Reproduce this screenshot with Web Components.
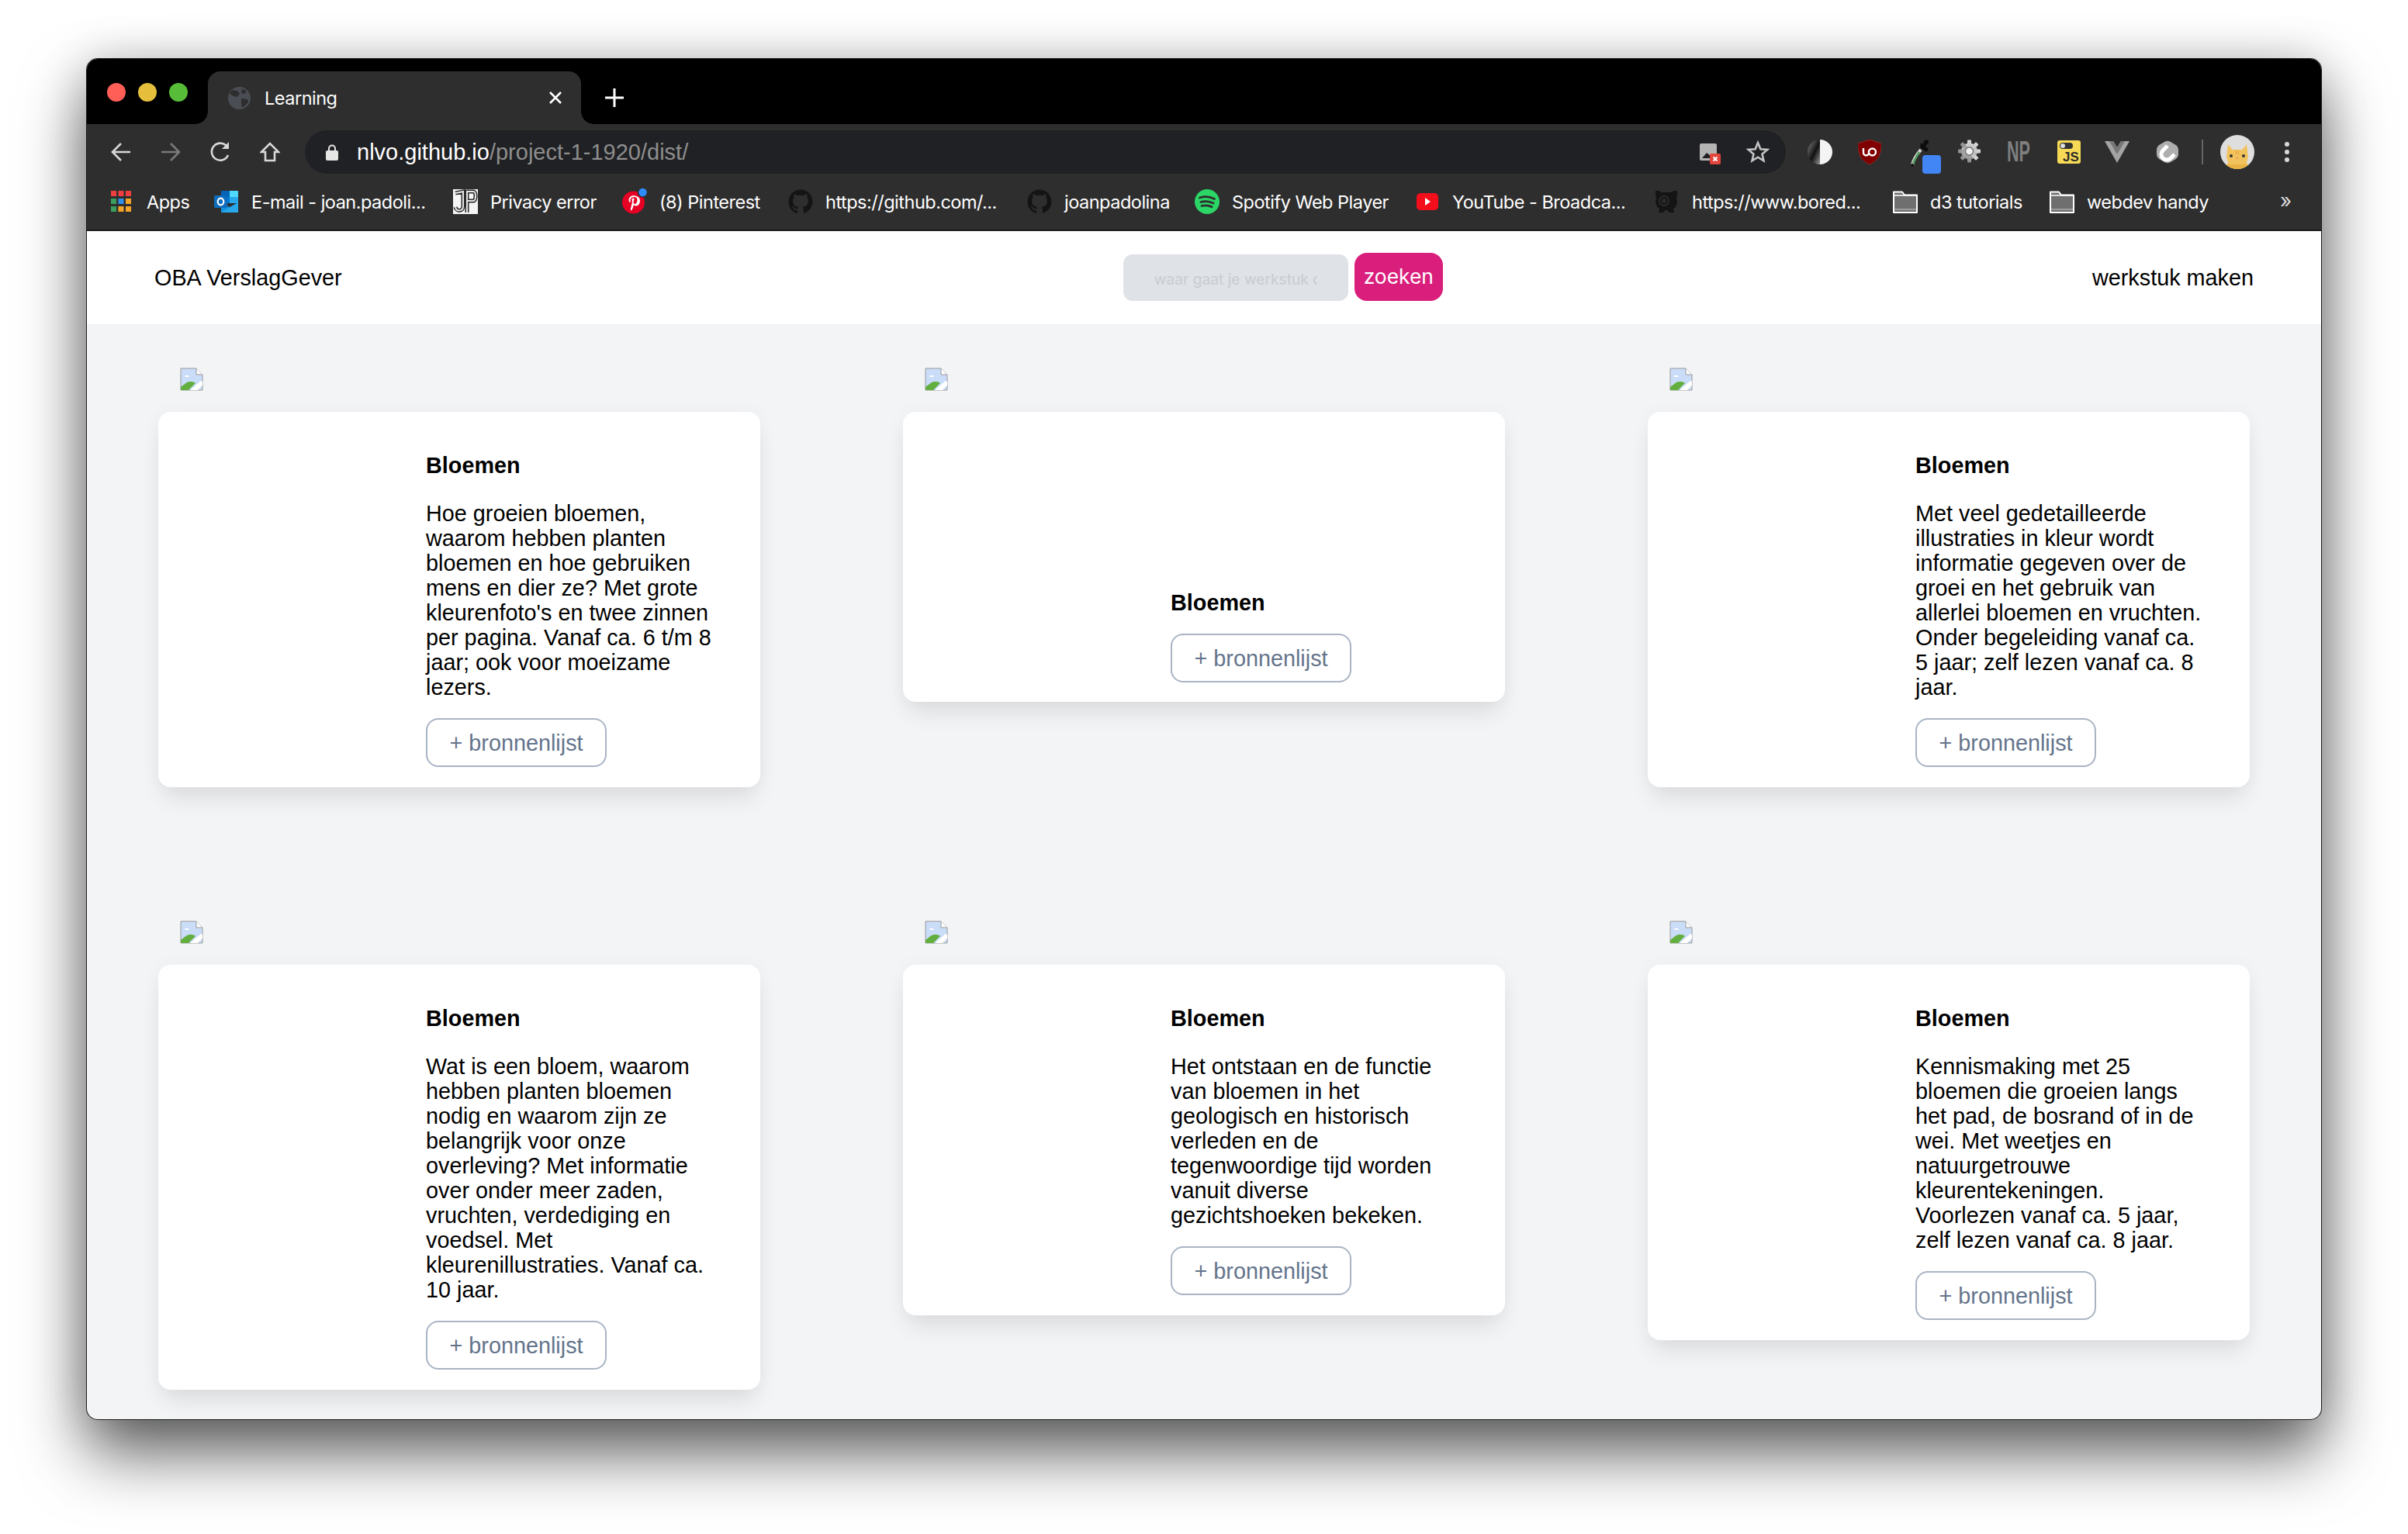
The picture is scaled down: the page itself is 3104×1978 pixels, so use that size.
<!DOCTYPE html>
<html lang="nl">
<head>
<meta charset="utf-8">
<title>Learning</title>
<style>
  html, body { margin: 0; height: 100%; background: #fff; }
  body { font-family: "Liberation Sans", Arial, sans-serif; overflow: hidden; }
</style>
</head>
<body>
<browser-window>
  <tab-strip slot="tabs" title="Learning"></tab-strip>
  <browser-toolbar slot="toolbar"></browser-toolbar>
  <bookmark-bar slot="bookmarks">
    <bookmark-item icon="apps" narrow>Apps</bookmark-item>
    <bookmark-item icon="outlook">E-mail - joan.padoli...</bookmark-item>
    <bookmark-item icon="jp">Privacy error</bookmark-item>
    <bookmark-item icon="pinterest">(8) Pinterest</bookmark-item>
    <bookmark-item icon="github">https://github.com/...</bookmark-item>
    <bookmark-item icon="github">joanpadolina</bookmark-item>
    <bookmark-item icon="spotify">Spotify Web Player</bookmark-item>
    <bookmark-item icon="youtube" narrow>YouTube - Broadca...</bookmark-item>
    <bookmark-item icon="panda">https://www.bored...</bookmark-item>
    <bookmark-item icon="folder">d3 tutorials</bookmark-item>
    <bookmark-item icon="folder">webdev handy</bookmark-item>
  </bookmark-bar>
  <site-nav slot="page"></site-nav>
  <card-grid slot="page">
    <result-card>Hoe groeien bloemen, waarom hebben planten bloemen en hoe gebruiken mens en dier ze? Met grote kleurenfoto's en twee zinnen per pagina. Vanaf ca. 6 t/m 8 jaar; ook voor moeizame lezers.</result-card>
    <result-card></result-card>
    <result-card>Met veel gedetailleerde illustraties in kleur wordt informatie gegeven over de groei en het gebruik van allerlei bloemen en vruchten. Onder begeleiding vanaf ca. 5 jaar; zelf lezen vanaf ca. 8 jaar.</result-card>
    <result-card>Wat is een bloem, waarom hebben planten bloemen nodig en waarom zijn ze belangrijk voor onze overleving? Met informatie over onder meer zaden, vruchten, verdediging en voedsel. Met kleurenillustraties. Vanaf ca. 10 jaar.</result-card>
    <result-card>Het ontstaan en de functie van bloemen in het geologisch en historisch verleden en de tegenwoordige tijd worden vanuit diverse gezichtshoeken bekeken.</result-card>
    <result-card>Kennismaking met 25 bloemen die groeien langs het pad, de bosrand of in de wei. Met weetjes en natuurgetrouwe kleurentekeningen. Voorlezen vanaf ca. 5 jaar, zelf lezen vanaf ca. 8 jaar.</result-card>
  </card-grid>
</browser-window>

<script>
const ICONS = {
  apps: `<svg width="26" height="32" viewBox="0 0 26 32">
    <rect y="2" width="7" height="7" fill="#ef3e3e"/><rect x="9.500" y="2" width="7" height="7" fill="#ef3e3e"/><rect x="19" y="2" width="7" height="7" fill="#ef3e3e"/>
    <rect y="12" width="7" height="7" fill="#3a9e5c"/><rect x="9.500" y="12" width="7" height="7" fill="#2f8ee8"/><rect x="19" y="12" width="7" height="7" fill="#f4a528"/>
    <rect y="22" width="7" height="7" fill="#3a9e5c"/><rect x="9.500" y="22" width="7" height="7" fill="#f4a528"/><rect x="19" y="22" width="7" height="7" fill="#f4a528"/></svg>`,
  outlook: `<svg width="32" height="32" viewBox="0 0 32 32">
    <rect x="9" y="2" width="22" height="16" fill="#28a8ea"/><rect x="9" y="2" width="11" height="8" fill="#0364b8"/><rect x="20" y="2" width="11" height="8" fill="#50d9ff"/><rect x="9" y="10" width="11" height="8" fill="#0078d4"/>
    <path d="M9 17l11 6 11-6v13H9z" fill="#1490df"/><path d="M9 30l22-13v13z" fill="#28a8ea"/>
    <rect y="8" width="17" height="16" rx="1.500" fill="#0f6cbd"/><ellipse cx="8.500" cy="16" rx="3.800" ry="4.300" fill="none" stroke="#fff" stroke-width="2.200"/></svg>`,
  jp: `<svg width="32" height="32" viewBox="0 0 32 32"><rect width="32" height="32" fill="#f6f6f6"/>
    <path d="M3 5l10-2v19c0 7-9 7-10 1M18 30V3h8c4 0 4 12 0 12h-8" fill="none" stroke="#2a2a2a" stroke-width="5"/>
    <path d="M3 5l10-2v19c0 7-9 7-10 1M18 30V3h8c4 0 4 12 0 12h-8" fill="none" stroke="#e6e6e6" stroke-width="2"/></svg>`,
  pinterest: `<svg width="34" height="34" viewBox="0 0 34 34" style="overflow:visible"><circle cx="14.500" cy="18" r="14.500" fill="#e60023"/>
    <path d="M15.500 9c-5 0-7 3-7 6 0 2 1 3 2 3 1-1 0-1 0-3 0-2 2-4 5-4s4 2 4 4c0 3-2 5-3 5s-2-1-2-2l1-4c0-2-3-2-3 1l.5 2-2 9c0 1 0 2 .5 3 1-1 2-3 2.500-5l1-3c.5 1 2 1.500 3 1.500 3 0 5-3 5-7 0-3-3-6-7-6z" fill="#fff"/>
    <circle cx="26.500" cy="5" r="6" fill="#2f8cff" stroke="#2e2e2e" stroke-width="1.500"/></svg>`,
  github: `<svg width="32" height="32" viewBox="0 0 32 32"><path d="M16 .5C7.200.5.500 7.600.500 16.200c0 6.900 4.300 12.700 10.400 14.800.8.100 1.100-.3 1.100-.8v-2.900c-4.300 1-5.200-2-5.200-2-.7-1.800-1.700-2.300-1.700-2.300-1.400-1 .1-1 .1-1 1.500.1 2.400 1.600 2.400 1.600 1.400 2.400 3.600 1.700 4.500 1.300.1-1 .5-1.700 1-2.100-3.500-.4-7.100-1.800-7.100-7.800 0-1.700.6-3.100 1.600-4.200-.2-.4-.7-2 .1-4.200 0 0 1.300-.4 4.300 1.600a15 15 0 0 1 7.800 0c3-2 4.300-1.600 4.300-1.600.9 2.200.3 3.800.1 4.200 1 1.100 1.600 2.500 1.600 4.200 0 6-3.700 7.400-7.100 7.800.6.500 1.100 1.400 1.100 2.900v4.300c0 .4.300.9 1.100.8 6.100-2.100 10.500-7.900 10.500-14.800C31.500 7.600 24.800.5 16 .5z" fill="#141414"/></svg>`,
  spotify: `<svg width="32" height="32" viewBox="0 0 32 32"><circle cx="16" cy="16" r="16" fill="#2bd566"/>
    <path d="M6.500 11c6-2 13-1.500 19 1.500M8 16.500c5-1.500 11-1 16 1.500M9 21.500c4.500-1 9-.7 13 1.300" fill="none" stroke="#2e2e2e" stroke-width="2.800" stroke-linecap="round"/></svg>`,
  youtube: `<svg width="28" height="32" viewBox="0 0 28 32"><rect y="5" width="28" height="22" rx="5" fill="#f40d1b"/><path d="M11 11l7 5-7 5z" fill="#fff"/></svg>`,
  panda: `<svg width="30" height="32" viewBox="0 0 30 32"><path d="M1 2h5l2 2h14l2-2h5v7l-1 2c2 7 0 12-4 14l1 5h-7l-1-3h-4l-1 3H5l1-5c-4-2-6-7-4-14l-1-2z" fill="#141414"/><circle cx="12" cy="15" r="7" fill="#2b2b2b"/><circle cx="12" cy="15" r="4" fill="none" stroke="#141414" stroke-width="2"/><circle cx="23" cy="15" r="1.500" fill="#141414"/></svg>`,
  folder: `<svg width="32" height="32" viewBox="0 0 32 32"><path d="M1 3.500h11l3 4h16v22.500H1z" fill="#6f6f6f" stroke="#fff" stroke-width="2" stroke-linejoin="round"/><path d="M1 8h30" stroke="#fff" stroke-width="1.500"/><path d="M2 26h28" stroke="#aaa" stroke-width="1.500"/></svg>`
};

// shared helper: each class just writes its own style + markup
function shadow(el, html) {
  el.attachShadow({ mode: "open" }).innerHTML = html;
}

class BrowserWindow extends HTMLElement {
  constructor() {
    super();
    shadow(this, `
      <style>
        :host { display: block; box-sizing: border-box; padding: 76px 112px 148px; height: 100vh; }
        .win {
          height: 100%; display: flex; flex-direction: column; overflow: hidden;
          border-radius: 14px; background: #f3f4f6;
          box-shadow: 0 0 0 1px #1a1a1a, 0 44px 84px rgba(0,0,0,.62), 0 0 60px rgba(0,0,0,.18);
        }
        .page { flex: 1; min-height: 0; overflow: hidden; }
      </style>
      <div class="win">
        <slot name="tabs"></slot>
        <slot name="toolbar"></slot>
        <slot name="bookmarks"></slot>
        <div class="page"><slot name="page"></slot></div>
      </div>`);
  }
}

class TabStrip extends HTMLElement {
  constructor() {
    super();
    shadow(this, `
      <style>
        :host { display: flex; height: 84px; background: #000; color: #fff; font: 23.500px Inter, sans-serif; }
        .lights { display: flex; gap: 16px; padding: 31px 0 0 26px; width: 156px; box-sizing: border-box; flex: none; }
        .lights i { width: 24px; height: 24px; border-radius: 50%; }
        .tab {
          width: 481px; margin-top: 16px; background: #2e2e2e; border-radius: 16px 16px 0 0;
          display: flex; align-items: center; padding: 0 24px 0 26px; box-sizing: border-box; position: relative; flex: none;
        }
        .tab::before, .tab::after { content: ""; position: absolute; bottom: 0; width: 16px; height: 16px; }
        .tab::before { left: -16px; background: radial-gradient(circle at 0 0, #000 15.500px, #2e2e2e 16px); }
        .tab::after { right: -16px; background: radial-gradient(circle at 100% 0, #000 15.500px, #2e2e2e 16px); }
        .name { margin-left: 18px; flex: 1; letter-spacing: -.5px; }
        .plus { margin: 38px 0 0 31px; align-self: flex-start; flex: none; }
      </style>
      <div class="lights"><i style="background:#ff5f57"></i><i style="background:#e5bf3c"></i><i style="background:#57bd38"></i></div>
      <div class="tab">
        <svg width="29" height="29" viewBox="0 0 29 29"><circle cx="14.500" cy="14.500" r="14.500" fill="#4a4e54"/><path d="M5 4l7 1 3 4-3 4-5-1-5-3zM18 2l6 4-3 3-4-1zM17 15l8 1 1 4-6 6-3-1z" fill="#2e2e2e"/></svg>
        <span class="name">${this.getAttribute("title") || ""}</span>
        <svg width="18" height="18" viewBox="0 0 18 18"><path d="M2 2l14 14M16 2L2 16" stroke="#fff" stroke-width="2.600"/></svg>
      </div>
      <svg class="plus" width="24" height="24" viewBox="0 0 24 24"><path d="M12 0v24M0 12h24" stroke="#fff" stroke-width="3"/></svg>`);
  }
}

class BrowserToolbar extends HTMLElement {
  constructor() {
    super();
    const stroke = 'fill="none" stroke="#d8d8d8" stroke-width="2.600"';
    shadow(this, `
      <style>
        :host { display: flex; align-items: center; height: 72px; padding: 8px 0 8px 31px; box-sizing: border-box; background: #2e2e2e; }
        svg { display: block; flex: none; }
        .nav { display: flex; gap: 38px; width: 250px; flex: none; align-items: center; }
        .omni {
          width: 1909px; height: 56px; background: #202124; border-radius: 28px; display: flex; align-items: center;
          font: 29px "Liberation Sans", Arial, sans-serif; color: #fff; box-sizing: border-box; padding-left: 27px; flex: none;
        }
        .url { margin-left: 24px; flex: 1; white-space: nowrap; }
        .url span { color: #8e8e8e; }
        .ext { display: flex; align-items: center; margin-left: 28px; height: 56px; }
        .sep { width: 2px; height: 32px; background: #666; }
      </style>
      <div class="nav">
        <svg width="26" height="26" viewBox="0 0 26 26"><path d="M25 13H3M13 2L2 13l11 11" ${stroke}/></svg>
        <svg width="26" height="26" viewBox="0 0 26 26"><path d="M1 13h22M13 2l11 11-11 11" fill="none" stroke="#7a7a7a" stroke-width="2.600"/></svg>
        <svg style="margin-right:-2px" width="28" height="26" viewBox="0 0 28 26"><path d="M23 17a11 11 0 1 1-1-10.500" ${stroke}/><path d="M24 0v9h-9z" fill="#d8d8d8"/></svg>
        <svg width="26" height="26" viewBox="0 0 26 26"><path d="M2 13L13 2l11 11h-5v11H7V13z" ${stroke}/></svg>
      </div>
      <div class="omni">
        <svg width="16" height="21" viewBox="0 0 16 21"><path d="M4 9V5.500a4 4 0 0 1 8 0V9" fill="none" stroke="#e6e6e6" stroke-width="2"/><rect y="8" width="16" height="13" rx="2" fill="#e6e6e6"/></svg>
        <div class="url">nlvo.github.io<span>/project-1-1920/dist/</span></div>
        <svg style="margin-top:5px" width="27" height="27" viewBox="0 0 27 27"><rect width="22" height="22" rx="2" fill="#b4b4b4"/><path d="M3 19l6-7 5 4 3-2 4 5z" fill="#202124"/><rect x="13" y="13" width="14" height="14" rx="2" fill="#e0443a"/><path d="M17.500 17.500l5 5M22.500 17.500l-5 5" stroke="#fff" stroke-width="2"/></svg>
        <svg style="margin:0 21px 0 33px" width="30" height="30" viewBox="0 0 30 30"><path d="M15 3l3.400 8.200 8.800.7-6.700 5.800 2 8.600L15 21.700l-7.500 4.600 2-8.600L2.800 11.900l8.800-.7z" fill="none" stroke="#c4c4c4" stroke-width="2.600"/></svg>
      </div>
      <div class="ext">
        <svg width="32" height="32" viewBox="0 0 32 32"><defs><linearGradient id="c" x1="0" x2="1" y1="0" y2="1"><stop offset="0" stop-color="#888"/><stop offset=".55" stop-color="#111"/><stop offset="1" stop-color="#999"/></linearGradient></defs><path d="M16 0a16 16 0 0 0 0 32z" fill="url(#c)"/><path d="M16 0a16 16 0 0 1 0 32z" fill="#f4f4f4"/></svg>
        <svg style="margin-left:33px" width="30" height="32" viewBox="0 0 30 32"><path d="M15 0l15 5c0 12-2 21-15 27C2 26 0 17 0 5z" fill="#800000" stroke="#9a3030" stroke-width=".8"/><path d="M7 11v6a3.500 3.500 0 0 0 7 0v-3.500M14 16a4.500 4.500 0 1 0 9 0 4.500 4.500 0 1 0-9 0" fill="none" stroke="#fff" stroke-width="2.400"/></svg>
        <svg style="margin:12px 0 0 38px" width="39" height="44" viewBox="0 0 39 44"><path d="M2 33c1-6 6-14 11-20" fill="none" stroke="#d8d8d8" stroke-width="4"/><path d="M3 31c2-5 5-10 8-15" stroke="#4d9a55" stroke-width="2.500"/><path d="M12 10l8 6 3-4-4-3 4-5c1-3-3-5-5-3l-3 5-2-2z" fill="#0d0d0d"/><circle cx="2" cy="33" r="2" fill="#111"/><rect x="15" y="20" width="24" height="24" rx="4" fill="#4285f4"/></svg>
        <svg style="margin-left:22px" width="29" height="32" viewBox="0 0 29 32"><defs><linearGradient id="g" x1="0" x2="0" y1="0" y2="1"><stop offset="0" stop-color="#dcdcdc"/><stop offset="1" stop-color="#8e8e8e"/></linearGradient></defs><g transform="translate(14.500 15)"><g fill="url(#g)"><circle r="10.500"/><rect x="-2.500" y="-14.500" width="5" height="29" rx="1"/><rect x="-2.500" y="-14.500" width="5" height="29" rx="1" transform="rotate(45)"/><rect x="-2.500" y="-14.500" width="5" height="29" rx="1" transform="rotate(90)"/><rect x="-2.500" y="-14.500" width="5" height="29" rx="1" transform="rotate(135)"/></g><circle r="5" fill="#f2f2f2" stroke="#777" stroke-width="1.500"/></g></svg>
        <span style="margin-left:34px;width:29px;color:#7f7f7f;font:700 36px 'Liberation Sans',sans-serif;transform:scaleX(.6);transform-origin:left;line-height:1;flex:none">NP</span>
        <svg style="margin-left:36px" width="30" height="30" viewBox="0 0 30 30"><rect width="30" height="30" rx="3" fill="#f6d955"/><rect x="3" y="3" width="17" height="8" rx="4" fill="#333"/><circle cx="7" cy="7" r="3" fill="#ddd"/><text x="7" y="27" font-family="Liberation Sans, sans-serif" font-weight="700" font-size="17" fill="#2b2b2b">JS</text></svg>
        <svg style="margin-left:31px" width="32" height="28" viewBox="0 0 32 28"><path d="M0 0h11l5 8 5-8h11L16 28z" fill="#a4a4a4"/><path d="M6 0h5l5 8 5-8h5L16 17z" fill="#777"/></svg>
        <svg style="margin-left:33px" width="32" height="32" viewBox="0 0 32 32"><path d="M12 3a8 8 0 0 1 8 0l6 3.500a8 8 0 0 1 4 7v5a8 8 0 0 1-4 7L20 29a8 8 0 0 1-8 0l-6-3.500a8 8 0 0 1-4-7v-5a8 8 0 0 1 4-7z" fill="#aeaeae"/><path d="M16 8l-6 6a7 7 0 0 0 10 10l5-5" fill="none" stroke="#fff" stroke-width="5"/></svg>
        <span class="sep" style="margin-left:28px;flex:none"></span>
        <svg style="margin-left:22px" width="44" height="44" viewBox="0 0 44 44"><clipPath id="av"><circle cx="22" cy="22" r="22"/></clipPath><circle cx="22" cy="22" r="22" fill="#dedede"/><g clip-path="url(#av)"><path d="M10 12l6 7h12l6-7 2 16-2 8 4 8H6l4-8-2-8z" fill="#f2c35c"/><path d="M20 20h1v5h-1zM23 20h1v5h-1z" fill="#e09a45"/><path d="M8 38h28v6H8z" fill="#e9b244"/><circle cx="14" cy="27" r="2" fill="#333"/><circle cx="30" cy="27" r="2" fill="#333"/><path d="M20 29h4l-2 2z" fill="#e8846a"/></g></svg>
        <svg style="margin-left:37px" width="10" height="32" viewBox="0 0 10 32"><circle cx="5" cy="6" r="3" fill="#d8d8d8"/><circle cx="5" cy="16" r="3" fill="#d8d8d8"/><circle cx="5" cy="26" r="3" fill="#d8d8d8"/></svg>
      </div>`);
  }
}

class BookmarkBar extends HTMLElement {
  constructor() {
    super();
    shadow(this, `
      <style>
        :host {
          display: grid; align-items: center;
          grid-template-columns: 133px 308px 218px 214px 308px 216px 286px 307px 307px 202px 297px auto;
          height: 66px; padding: 0 0 8px 31px; box-sizing: border-box;
          background: #2e2e2e; border-bottom: 2px solid #1d1d1d; color: #fff;
        }
        .more { font: 26px Inter, sans-serif; color: #ddd; margin-top: -4px; }
      </style>
      <slot></slot><span class="more">»</span>`);
  }
}

class BookmarkItem extends HTMLElement {
  constructor() {
    super();
    shadow(this, `
      <style>
        :host { display: flex; align-items: center; gap: 16px; font: 23.500px Inter, sans-serif; letter-spacing: -.5px; white-space: nowrap; }
        svg { display: block; flex: none; }
        .i { display: flex; flex: none; width: 32px; }
        :host([narrow]) .i { width: 30px; }
      </style>
      <span class="i">${ICONS[this.getAttribute("icon")]}</span><slot></slot>`);
  }
}

class SiteNav extends HTMLElement {
  constructor() {
    super();
    shadow(this, `
      <style>
        :host {
          display: flex; align-items: center; justify-content: space-between; height: 120px; padding: 0 87px;
          box-sizing: border-box; background: #fff; color: #000; font: 28.800px "Liberation Sans", Arial, sans-serif;
        }
        .search { display: flex; align-items: flex-end; gap: 8px; font-family: Inter, sans-serif; height: 62px; margin-left: 170px; margin-top: -2px; }
        .box {
          width: 290px; height: 60px; background: #dfe2e7; border-radius: 12px; box-sizing: border-box;
          padding: 0 40px; color: #c9ccd1; font-size: 19.200px; display: flex; align-items: center; overflow: hidden; white-space: nowrap;
        }
        .box span { display: block; width: 210px; overflow: hidden; margin-top: 4px; }
        .go { width: 114px; height: 62px; background: #d91e7c; color: #fff; border-radius: 16px; display: flex; align-items: center; justify-content: center; font-size: 26.400px; padding-bottom: 2px; box-sizing: border-box; }
      </style>
      <span>OBA VerslagGever</span>
      <div class="search"><div class="box"><span>waar gaat je werkstuk over</span></div><div class="go">zoeken</div></div>
      <span>werkstuk maken</span>`);
  }
}

class CardGrid extends HTMLElement {
  constructor() {
    super();
    shadow(this, `
      <style>
        :host { display: grid; grid-template-columns: repeat(3, 776px); column-gap: 184px; row-gap: 172px; align-items: start; padding: 56px 0 0 92px; }
      </style>
      <slot></slot>`);
  }
}

class ResultCard extends HTMLElement {
  constructor() {
    super();
    shadow(this, `
      <style>
        :host { display: block; color: #000; font: 28.800px/32px "Liberation Sans", Arial, sans-serif; }
        .broken { display: block; margin: 0 0 27px 28px; }
        .card {
          box-sizing: border-box; min-height: 374px; background: #fff; border-radius: 16px; padding: 53px 60px 26px 345px;
          box-shadow: 0 20px 30px -6px rgba(0,0,0,.09), 0 0 24px rgba(0,0,0,.035);
          display: flex; flex-direction: column; justify-content: flex-end;
        }
        .card.empty { padding-bottom: 25px; }
        h3 { margin: 0; font-size: 28.800px; font-weight: 700; line-height: 32px; }
        .desc { margin-top: 30px; }
        .empty .desc { display: none; }
        .btn {
          align-self: flex-start; margin-top: 24px; box-sizing: border-box; width: 233px; height: 63px; border: 2px solid #a9b4c4;
          border-radius: 16px; color: #64748b; display: flex; align-items: center; justify-content: center;
        }
      </style>
      <svg class="broken" width="30" height="30" viewBox="0 0 30 30">
        <path d="M1 1h20l8 8v20H1z" fill="#c9dcf8" stroke="#9a9a9a" stroke-width="1"/>
        <path d="M21 1v8h8" fill="#fff" stroke="#9a9a9a" stroke-width="1"/>
        <path d="M6 12c0-3 5-3 6 0z" fill="#fff"/>
        <path d="M1 29V25l8-6c4-2 9-1 11 1l-9 9z" fill="#62ae3e"/>
        <path d="M13 29l14-12 2 1v5l-6 6z" fill="#fff"/>
      </svg>
      <div class="card">
        <h3>Bloemen</h3>
        <div class="desc"><slot></slot></div>
        <div class="btn">+ bronnenlijst</div>
      </div>`);
  }
  connectedCallback() {
    if (!this.textContent.trim()) this.shadowRoot.querySelector(".card").classList.add("empty");
  }
}

customElements.define("browser-window", BrowserWindow);
customElements.define("tab-strip", TabStrip);
customElements.define("browser-toolbar", BrowserToolbar);
customElements.define("bookmark-bar", BookmarkBar);
customElements.define("bookmark-item", BookmarkItem);
customElements.define("site-nav", SiteNav);
customElements.define("card-grid", CardGrid);
customElements.define("result-card", ResultCard);
</script>
</body>
</html>
